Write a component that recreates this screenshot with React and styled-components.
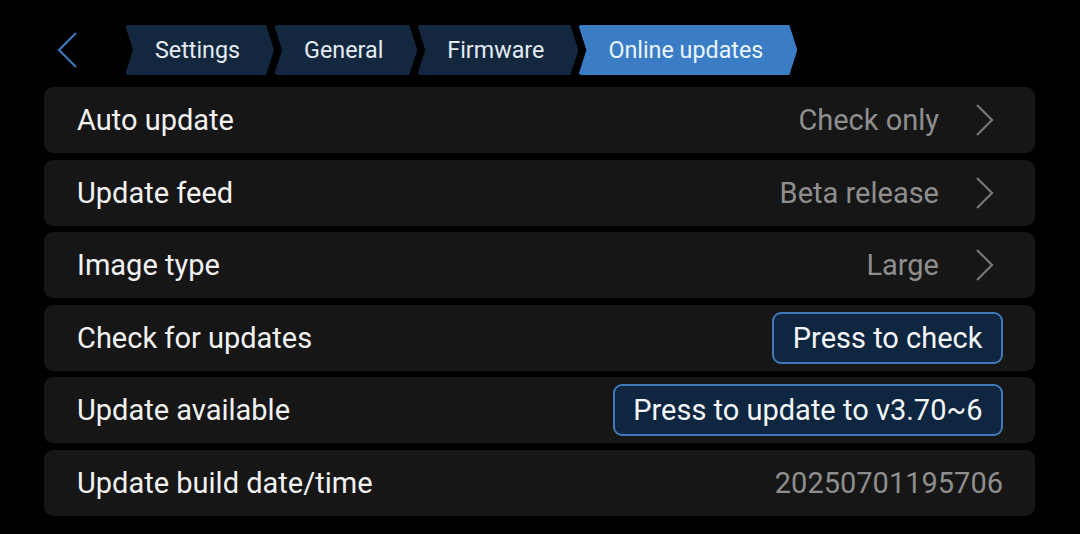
import React from 'react';
import styled, { createGlobalStyle } from 'styled-components';

const GlobalStyle = createGlobalStyle`
  html, body {
    margin: 0;
    padding: 0;
    background: #000;
  }
  body {
    font-family: Roboto, "Noto Sans", sans-serif;
    -webkit-font-smoothing: antialiased;
  }
`;

const Page = styled.div`
  width: 1080px;
  height: 534px;
  box-sizing: border-box;
  padding: 25px 45px 0 44px;
  background: #000;
`;

const Header = styled.header`
  display: flex;
  align-items: center;
  height: 50px;
  margin-bottom: 12px;
`;

const BackButton = styled.button`
  display: flex;
  align-items: center;
  background: none;
  border: none;
  padding: 0;
  margin-left: 13px;
  cursor: pointer;
`;

const Crumbs = styled.nav`
  display: flex;
  height: 100%;
  margin-left: 46px;
`;

const Crumb = styled.div`
  display: flex;
  align-items: center;
  height: 100%;
  padding: 0 34px 0 30px;
  font-size: 23.3px;
  color: ${p => (p.$active ? '#eaf5ff' : '#e4ebf2')};
  background: ${p => (p.$active ? '#3a7dc5' : '#13283f')};
  clip-path: polygon(0 0, calc(100% - 8px) 0, 100% 50%, calc(100% - 8px) 100%, 0 100%, 8px 50%);
  border-radius: 4px;
  white-space: nowrap;
`;

const List = styled.section`
  display: flex;
  flex-direction: column;
  gap: 6.6px;
`;

const Row = styled.div`
  display: flex;
  align-items: center;
  justify-content: space-between;
  height: 66px;
  padding: 0 32px 0 33px;
  background: #161616;
  border-radius: 9px;
`;

const Label = styled.span`
  font-size: 29px;
  color: #f2f2f2;
`;

const ValueGroup = styled.div`
  display: flex;
  align-items: center;
  gap: 36px;
`;

const Value = styled.span`
  font-size: 29px;
  color: #8e8e8e;
`;

const ActionButton = styled.button`
  height: 52px;
  padding: 0 18.5px;
  font-family: inherit;
  font-size: 29px;
  color: #f4f7fa;
  background: #0e2640;
  border: 2px solid #4079b9;
  border-radius: 9px;
  cursor: pointer;
`;

const BackIcon = () => (
  <svg width="22" height="38" viewBox="0 0 22 38">
    <polyline points="19,2 2,19 19,36" fill="none" stroke="#3b75ba" strokeWidth="2.2" />
  </svg>
);

const Chevron = () => (
  <svg width="28" height="34" viewBox="0 0 28 34">
    <polyline points="2,2 17,17 2,32" fill="none" stroke="#767676" strokeWidth="2.2" />
  </svg>
);

const crumbs = ['Settings', 'General', 'Firmware', 'Online updates'];

const SelectRow = ({ label, value }) => (
  <Row>
    <Label>{label}</Label>
    <ValueGroup>
      <Value>{value}</Value>
      <Chevron />
    </ValueGroup>
  </Row>
);

export default function App() {
  return (
    <Page>
      <GlobalStyle />
      <Header>
        <BackButton aria-label="Back">
          <BackIcon />
        </BackButton>
        <Crumbs>
          {crumbs.map((c, i) => (
            <Crumb key={c} $active={i === crumbs.length - 1}>{c}</Crumb>
          ))}
        </Crumbs>
      </Header>
      <List>
        <SelectRow label="Auto update" value="Check only" />
        <SelectRow label="Update feed" value="Beta release" />
        <SelectRow label="Image type" value="Large" />
        <Row>
          <Label>Check for updates</Label>
          <ActionButton>Press to check</ActionButton>
        </Row>
        <Row>
          <Label>Update available</Label>
          <ActionButton>Press to update to v3.70~6</ActionButton>
        </Row>
        <Row>
          <Label>Update build date/time</Label>
          <Value>20250701195706</Value>
        </Row>
      </List>
    </Page>
  );
}
